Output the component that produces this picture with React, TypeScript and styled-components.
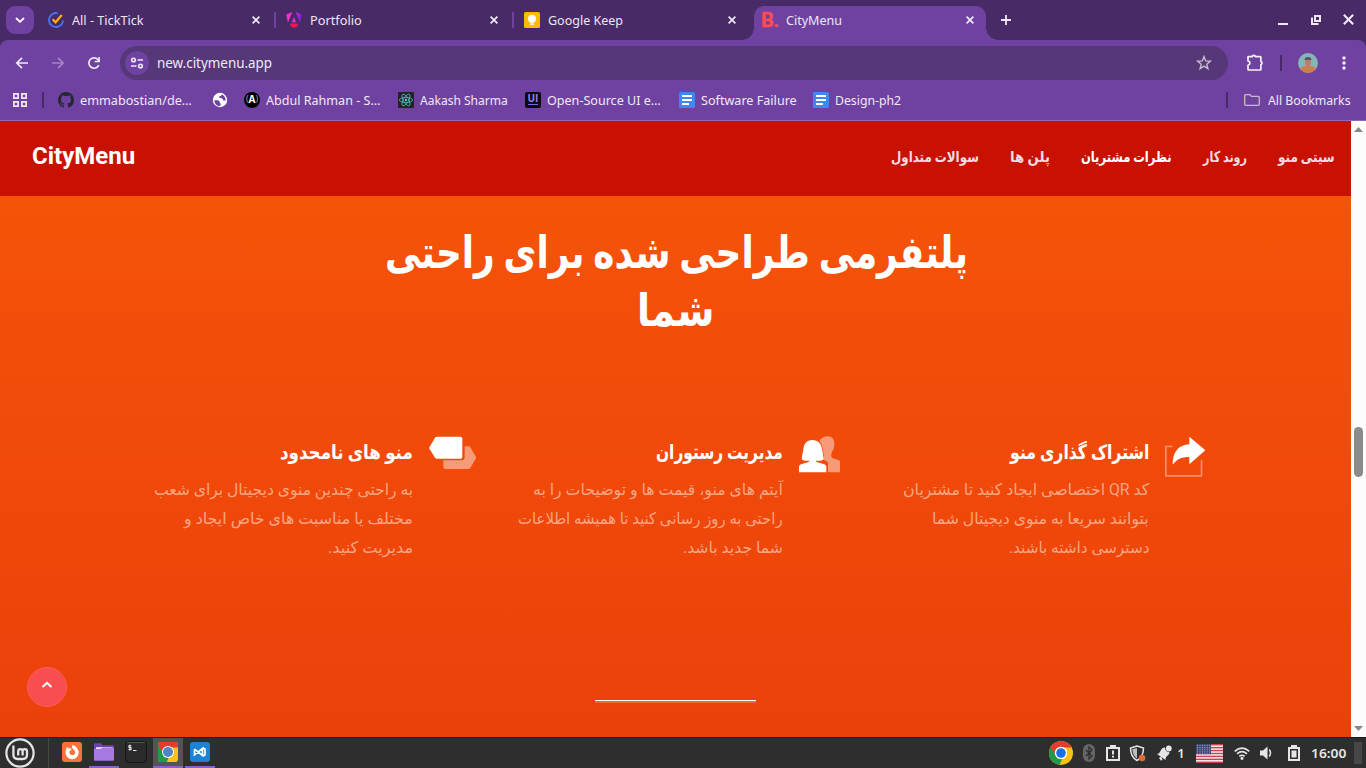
import React, { useLayoutEffect, useRef, useState } from 'react';
import styled, { createGlobalStyle } from 'styled-components';

const GlobalStyle = createGlobalStyle`
  * { box-sizing: border-box; }
  body { margin: 0; overflow: hidden; background: #2e2e2e; }
  svg { display: block; flex: none; }
`;

const ui = `'Noto Sans', 'Open Sans', sans-serif`;
const web = `Roboto, 'DejaVu Sans', sans-serif`;

/* A single line of text that is condensed or widened to a given measure. */
const Measure = styled.span<{ $w: number }>`
  display: block;
  flex: none;
  width: ${p => p.$w}px;
  white-space: nowrap;
`;
const Stretch = styled.span<{ $rtl?: boolean }>`
  display: inline-block;
  transform-origin: ${p => (p.$rtl ? 'right' : 'left')} center;
`;
function Fit({ w, rtl, children }: { w: number; rtl?: boolean; children: React.ReactNode }) {
  const ref = useRef<HTMLSpanElement>(null);
  const [scale, setScale] = useState(1);
  useLayoutEffect(() => {
    if (ref.current) setScale(w / ref.current.offsetWidth);
  }, [w]);
  return (
    <Measure $w={w}>
      <Stretch ref={ref} $rtl={rtl} style={{ transform: `scaleX(${scale})` }}>{children}</Stretch>
    </Measure>
  );
}

const Screen = styled.div`
  width: 1366px;
  height: 768px;
  display: flex;
  flex-direction: column;
  overflow: hidden;
  font-family: ${ui};
`;

/* ---------- browser chrome ---------- */
const TabStrip = styled.div`
  height: 40px;
  flex: none;
  display: flex;
  align-items: center;
  background: #472a66;
  color: #ece6f3;
  font-size: 13px;
`;
const TabSearch = styled.div`
  width: 28px;
  height: 28px;
  margin: 0 4px 0 6px;
  border-radius: 9px;
  background: #6f42a1;
  display: flex;
  align-items: center;
  justify-content: center;
`;
const Tab = styled.div<{ $active?: boolean; $divider?: boolean }>`
  position: relative;
  width: ${p => (p.$active ? 232 : 238)}px;
  height: 34px;
  margin: ${p => (p.$active ? '6px 0 0 2px' : '0')};
  padding: 0 ${p => (p.$active ? 12 : 16)}px ${p => (p.$active ? 6 : 0)}px ${p => (p.$active ? 8 : 10)}px;
  display: flex;
  align-items: center;
  gap: 8px;
  background: ${p => (p.$active ? '#6f42a1' : 'transparent')};
  border-radius: 10px 10px 0 0;
  ${p => p.$divider && `
    &::after {
      content: '';
      position: absolute;
      right: 0;
      top: 9px;
      width: 2px;
      height: 16px;
      background: #6f42a1;
    }`}
  ${p => p.$active && `
    &::before, &::after {
      content: '';
      position: absolute;
      bottom: 0;
      width: 12px;
      height: 12px;
    }
    &::before { left: -12px; background: radial-gradient(circle at 0 0, transparent 11.5px, #6f42a1 12px); }
    &::after { right: -12px; background: radial-gradient(circle at 100% 0, transparent 11.5px, #6f42a1 12px); }`}
`;
const Spacer = styled.div`flex: 1;`;
const WindowButtons = styled.div`
  display: flex;
  gap: 21px;
  margin-right: 12px;
`;
const NewTab = styled.div`margin-left: 13px;`;

const Chrome = styled.div`background: #472a66; flex: none;`;
const Panel = styled.div`
  height: 81px;
  background: #6f42a1;
  border-radius: 8px 8px 0 0;
  border-bottom: 1px solid #8d6ab5;
  color: #efe9f6;
`;
const Toolbar = styled.div`
  height: 46px;
  display: flex;
  align-items: center;
  padding-left: 14px;
`;
const NavIcons = styled.div`
  display: flex;
  gap: 20px;
  width: 106px;
`;
const Omnibox = styled.div`
  width: 1108px;
  height: 34px;
  border-radius: 17px;
  background: #563777;
  display: flex;
  align-items: center;
  padding: 0 16px 0 5px;
`;
const Address = styled.div`
  font-size: 14px;
  padding-bottom: 2px;
`;
const SiteInfo = styled.div`
  width: 24px;
  height: 24px;
  border-radius: 50%;
  background: #6f42a1;
  margin-right: 8px;
  display: flex;
  align-items: center;
  justify-content: center;
`;
const Divider = styled.div<{ $ml: number; $mr: number }>`
  width: 2px;
  height: 16px;
  margin: 0 ${p => p.$mr}px 0 ${p => p.$ml}px;
  background: #472a66;
`;
const BookmarkBar = styled.div`
  height: 28px;
  padding: 0 15px 0 12px;
  display: flex;
  align-items: center;
  font-size: 13px;
`;
const Bookmark = styled.div<{ $ml: number }>`
  display: flex;
  align-items: center;
  gap: 6px;
  margin-left: ${p => p.$ml}px;
`;

/* ---------- page ---------- */
const Viewport = styled.div`
  height: 616px;
  flex: none;
  display: flex;
`;
const Page = styled.div`
  width: 1351px;
  display: flex;
  flex-direction: column;
  background: linear-gradient(#f55309 75px, #ec400b 616px);
  font-family: ${web};
  color: #fff;
`;
const Header = styled.header`
  height: 75px;
  flex: none;
  background: #c81100;
  display: flex;
  align-items: center;
  justify-content: space-between;
  padding: 0 16px 4px 32px;
`;
const Brand = styled.div`
  font-size: 24px;
  font-weight: 700;
  line-height: 30px;
  padding-bottom: 1px;
`;
const Menu = styled.nav`
  direction: rtl;
  display: flex;
  gap: 31px;
  font-size: 15px;
  font-weight: 700;
`;
const MenuItem = styled.a<{ $active?: boolean }>`
  color: ${p => (p.$active ? '#fff' : '#f1dbe2')};
`;
const Hero = styled.h1`
  direction: rtl;
  height: 240px;
  margin: 0;
  padding: 28px 0 0 1px;
  display: flex;
  flex-direction: column;
  align-items: center;
  font-size: 45px;
  font-weight: 700;
  line-height: 58px;
`;
const Features = styled.section`
  direction: rtl;
  display: flex;
  height: 264px;
  padding: 0 145px 0 0;
`;
const Feature = styled.article`
  width: 366px;
  display: flex;
  align-items: flex-start;
  gap: 16px;
  &:nth-child(2) { width: 364px; }
`;
const FeatureTitle = styled.h3`
  margin: 1px 0 8px;
  font-size: 20px;
  font-weight: 700;
  line-height: 30px;
`;
const FeatureText = styled.div`
  font-size: 16px;
  line-height: 29px;
  color: #f9a583;
`;
const PageFoot = styled.div`
  display: flex;
  align-items: flex-start;
  height: 37px;
`;
const Rule = styled.div`
  width: 161px;
  height: 3px;
  margin-left: 528px;
  border-top: 1px solid #fff;
  background: #f4663a;
`;
const ToTop = styled.button`
  width: 40px;
  height: 40px;
  flex: none;
  margin: -33px 0 0 27px;
  padding: 0 0 4px;
  border: 1px solid #fa5c60;
  border-radius: 50%;
  background: #f94d50;
  display: flex;
  align-items: center;
  justify-content: center;
`;
const Scrollbar = styled.div`
  width: 15px;
  background: #fcfcfc;
  display: flex;
  flex-direction: column;
  align-items: center;
  justify-content: space-between;
  padding: 6px 1px 6px 0;
`;
const Track = styled.div`
  height: 580px;
  padding-top: 288px;
`;
const Thumb = styled.div`
  width: 9px;
  height: 50px;
  border-radius: 5px;
  background: #8b8b8b;
`;

/* ---------- desktop panel ---------- */
const Taskbar = styled.footer`
  height: 31px;
  flex: none;
  border-top: 1px solid #1c1c1c;
  background: #2e2e2e;
  display: flex;
  align-items: center;
  color: #e6e6e6;
  font-size: 13px;
  font-weight: 600;
`;
const StartMenu = styled.div`
  width: 49px;
  height: 30px;
  margin-right: 8px;
  padding-left: 5px;
  border-right: 1px solid #464646;
  display: flex;
  align-items: center;
`;
const TaskButton = styled.div<{ $open?: boolean; $focused?: boolean }>`
  width: 30px;
  height: 30px;
  margin-right: 2px;
  padding-bottom: ${p => (p.$open ? 0 : 2)}px;
  display: flex;
  align-items: center;
  justify-content: center;
  background: ${p => (p.$focused ? '#545454' : 'transparent')};
  border-bottom: ${p => (p.$open ? '2px solid #8b5fd0' : 'none')};
`;
const Tray = styled.div<{ $w: number }>`
  width: ${p => p.$w}px;
  height: 30px;
  display: flex;
  align-items: center;
  justify-content: center;
`;
const ShowDesktop = styled.div`
  width: 8px;
  height: 22px;
  margin: 0 4px 0 2px;
  background: #474747;
`;

/* ---------- drawings ---------- */
const CloseIcon = ({ size = 8 }: { size?: number }) => (
  <svg width={size} height={size} viewBox="0 0 8 8"><path d="M.6.6l6.8 6.8M7.4.6L.6 7.4" stroke="#f0ebf6" strokeWidth={size > 8 ? 1.5 : 1.7} /></svg>
);
const TickTick = () => (
  <svg width="16" height="16" viewBox="0 0 16 16" fill="none">
    <path d="M9.600 1.200A7 7 0 1 0 15 8.400" stroke="#4772fa" strokeWidth="1.800" />
    <path d="M4.600 7.300l3 3L13.800 3" stroke="#ffb000" strokeWidth="2.200" />
  </svg>
);
const Angular = () => (
  <svg width="16" height="16" viewBox="0 0 16 16">
    <defs><linearGradient id="ng" gradientUnits="userSpaceOnUse" x1="0" y1="6" x2="16" y2="6"><stop stopColor="#ff2fc0" /><stop offset=".5" stopColor="#e32fd0" /><stop offset="1" stopColor="#7514f5" /></linearGradient></defs>
    <path d="M6.300 0L1.900 10.700.3 2.500zM9.700 0l4.400 10.700 1.600-8.200zM8 4.900l2.200 5.300H5.800z" fill="url(#ng)" />
    <path d="M4.800 11.600h6.400l.9 2.200L8 16l-4.100-2.200z" fill="#ff1158" />
  </svg>
);
const Keep = () => (
  <svg width="16" height="16" viewBox="0 0 16 16">
    <rect width="16" height="16" rx="1.500" fill="#fbbc04" />
    <circle cx="8" cy="6.700" r="4" fill="#fff" /><path d="M5.800 9h4.400v1.600H5.800zM6 11.400h4v1.300H6z" fill="#fff" />
  </svg>
);
const BrandB = styled.span`
  width: 16px;
  flex: none;
  font: 700 20px/20px Roboto, sans-serif;
  letter-spacing: -.6px;
  text-indent: -1px;
  color: #fb4c4f;
  -webkit-text-stroke: .4px #fb4c4f;
`;
const GitHub = () => (
  <svg width="16" height="16" viewBox="0 0 16 16" fill="#24292f"><path d="M8 0C3.58 0 0 3.58 0 8c0 3.54 2.29 6.53 5.47 7.59.4.07.55-.17.55-.38 0-.19-.01-.82-.01-1.49-2.01.37-2.53-.49-2.69-.94-.09-.23-.48-.94-.82-1.13-.28-.15-.68-.52-.01-.53.63-.01 1.08.58 1.23.82.72 1.21 1.87.87 2.33.66.07-.52.28-.87.51-1.07-1.78-.2-3.64-.89-3.64-3.95 0-.87.31-1.59.82-2.15-.08-.2-.36-1.02.08-2.12 0 0 .67-.21 2.2.82a7.6 7.6 0 0 1 4 0c1.53-1.04 2.2-.82 2.2-.82.44 1.1.16 1.92.08 2.12.51.56.82 1.27.82 2.15 0 3.07-1.87 3.75-3.65 3.95.29.25.54.73.54 1.48 0 1.07-.01 1.93-.01 2.2 0 .21.15.46.55.38A8 8 0 0 0 16 8c0-4.42-3.58-8-8-8z" /></svg>
);
const Globe = () => (
  <svg width="16" height="16" viewBox="0 0 16 16">
    <circle cx="8" cy="8" r="7.200" fill="#fff" />
    <path d="M2.300 8.300h3.200q2.200 0 2.200 1.800v.6q1.300.3 1 2.600l-1.400.9C4.300 13.800 2.300 11.500 2.300 8.300z" fill="#6f42a1" />
    <path d="M9.700 2.500q-.3 1.500-1.600 1.500-1.200.2-1 1.300.2.800 1.800.7 1.700 0 1.900 1.500.2 1.100 1.300 1.100l1.600-.1C13.700 5.800 12 3.200 9.700 2.500z" fill="#6f42a1" />
  </svg>
);
const LetterBadge = styled.span`
  width: 16px;
  height: 16px;
  flex: none;
  border-radius: 50%;
  background: #000;
  color: #fff;
  font: 700 10px/15px 'Open Sans', sans-serif;
  display: flex;
  justify-content: center;
  i { font: 400 9px/14px 'Open Sans', sans-serif; color: #aaa; }
`;
const ReactLogo = () => (
  <svg width="16" height="16" viewBox="0 0 16 16">
    <rect width="16" height="16" rx="1" fill="#222" />
    <g fill="none" stroke="#55bccb" strokeWidth=".8">
      <ellipse cx="8" cy="8" rx="6.600" ry="2.600" />
      <ellipse cx="8" cy="8" rx="6.600" ry="2.600" transform="rotate(60 8 8)" />
      <ellipse cx="8" cy="8" rx="6.600" ry="2.600" transform="rotate(120 8 8)" />
    </g>
    <circle cx="8" cy="8" r="1.200" fill="#5ccfe0" />
  </svg>
);
const UiBadge = styled.span`
  width: 16px;
  height: 16px;
  flex: none;
  border-radius: 2px;
  background: linear-gradient(#7a68e0, #7a68e0) 3px 12px / 10px 1px no-repeat, #0c0a12;
  color: #9084f4;
  font: 700 10px/13px 'Open Sans', sans-serif;
  text-align: center;
`;
const Docs = () => (
  <svg width="16" height="16" viewBox="0 0 16 16"><rect width="16" height="16" rx="1.500" fill="#4285f4" /><path d="M3 3h10v2H3zM3 7h10v2H3zM3 11h7v2H3z" fill="#fff" /></svg>
);
const Folder = () => (
  <svg width="16" height="12" viewBox="0 0 16 12"><path d="M.7 10.300V1.700q0-1 1-1h4.200l1.600 1.700h6.800q1 0 1 1v6.900q0 1-1 1H1.700q-1 0-1-1z" fill="none" stroke="#c8bccb" strokeWidth="1.300" /></svg>
);
const ChromeLogo = ({ size, square }: { size: number; square?: boolean }) => (
  <svg width={size} height={size} viewBox="0 0 24 24">
    <defs><clipPath id={square ? 'cs' : 'cc'}>{square ? <rect x="0" y="0" width="24" height="24" rx="4" /> : <circle cx="12" cy="12" r="12" />}</clipPath></defs>
    <g clipPath={`url(#${square ? 'cs' : 'cc'})`}>
      <rect width="24" height="24" fill="#fbc116" />
      <path d="M-2-2h28v8.500H12L7 15-2 3z" fill="#e33b2e" />
      <path d="M0 3.500L7.200 15l4.800 2.500h1.500L10 25H-2z" fill="#229a48" />
    </g>
    <circle cx="12" cy="12" r={square ? 7.2 : 6.2} fill="#fff" />
    <circle cx="12" cy="12" r={square ? 6 : 4.8} fill={square ? '#4f86c6' : '#1a6fe8'} />
  </svg>
);

const tabs = [
  { icon: <TickTick />, title: 'All - TickTick', w: 72 },
  { icon: <Angular />, title: 'Portfolio', w: 52 },
  { icon: <Keep />, title: 'Google Keep', w: 75 },
  { icon: <BrandB>B.</BrandB>, title: 'CityMenu', w: 56 },
];
const bookmarks = [
  { icon: <GitHub />, title: 'emmabostian/de…', w: 112, ml: 0 },
  { icon: <Globe />, title: '', w: 0, ml: 20 },
  { icon: <LetterBadge><i>(</i>A<i>)</i></LetterBadge>, title: 'Abdul Rahman - S…', w: 114, ml: 16 },
  { icon: <ReactLogo />, title: 'Aakash Sharma', w: 88, ml: 18 },
  { icon: <UiBadge>UI</UiBadge>, title: 'Open-Source UI e…', w: 114, ml: 17 },
  { icon: <Docs />, title: 'Software Failure', w: 96, ml: 18 },
  { icon: <Docs />, title: 'Design-ph2', w: 66, ml: 16 },
];
const menu = [
  { text: 'سیتی منو', w: 57 },
  { text: 'روند کار', w: 44 },
  { text: 'نظرات مشتریان', w: 91, active: true },
  { text: 'پلن ها', w: 40 },
  { text: 'سوالات متداول', w: 88 },
];

const ShareIcon = () => (
  <svg width="41" height="41" viewBox="885 50 123 123">
    <path d="M908 81.500H887.500V169.500H994.500V123" fill="none" stroke="#f98d66" strokeWidth="5" />
    <path d="M958 52l48 41-48 42v-22c-24 0-38 6-48 22h-2c0-37 17-58 50-60z" fill="#fff" />
  </svg>
);
const PeopleIcon = () => (
  <svg width="41" height="37" viewBox="897 50 123 111">
    <path d="M958 66c5-10 15-15 25-15 14 0 20 10 20 23 0 10-2 16-6 22-4 7-5 16 0 20l20 7q3 1 3 5v31h-36v-27q0-6-6-8l-14-5q10-2 8-9l-5-25c-1-8-4-14-9-19z" fill="#f79a78" />
    <path d="M937 62c18 0 27 12 29 28l5 27q0 6-8 7h-15c0 3 2 4 5 5l20 6q6 2 6 7v17h-82v-17q0-5 6-7l20-6q5-2 5-5h-15q-8-1-8-7l5-27c2-16 9-28 27-28z" fill="#fff" />
  </svg>
);
const TagsIcon = () => (
  <svg width="47" height="34" viewBox="866 50 141 102">
    <path d="M973 81h11q4 0 6 3l18 31-18 31q-2 3-6 3h-69q-6 0-6-6v-20h55q9 0 9-9z" fill="#f79a78" />
    <path d="M890 52h70q6 0 6 6v54q0 6-6 6h-70q-4 0-6-3l-18-29 18-31q2-3 6-3z" fill="#fff" />
  </svg>
);
const features = [
  { icon: <ShareIcon />, title: 'اشتراک گذاری منو', tw: 139, lines: [['کد QR اختصاصی ایجاد کنید تا مشتریان', 246], ['بتوانند سریعا به منوی دیجیتال شما', 217], ['دسترسی داشته باشند.', 140]] },
  { icon: <PeopleIcon />, title: 'مدیریت رستوران', tw: 127, lines: [['آیتم های منو، قیمت ها و توضیحات را به', 250], ['راحتی به روز رسانی کنید تا همیشه اطلاعات', 265], ['شما جدید باشد.', 100]] },
  { icon: <TagsIcon />, title: 'منو های نامحدود', tw: 133, lines: [['به راحتی چندین منوی دیجیتال برای شعب', 259], ['مختلف یا مناسبت های خاص ایجاد و', 229], ['مدیریت کنید.', 85]] },
] as { icon: React.ReactNode; title: string; tw: number; lines: [string, number][] }[];

const Flag = () => (
  <svg width="27" height="19" viewBox="0 0 27 19">
    <rect width="27" height="19" fill="#f4f4f4" />
    {[0, 1, 2, 3, 4, 5, 6].map(i => <rect key={i} y={i * 2.92} width="27" height="1.46" fill="#c8434e" />)}
    <rect width="15" height="10.200" fill="#3c4778" />
    {[0, 1, 2, 3, 4].map(r => [0, 1, 2, 3, 4, 5].map(c => <circle key={`${r}-${c}`} cx={1.6 + c * 2.4} cy={1.2 + r * 1.95} r=".5" fill="#c5c9dc" />))}
  </svg>
);

export default function App() {
  return (
    <Screen>
      <GlobalStyle />
      <TabStrip>
        <TabSearch><svg width="10" height="6" viewBox="0 0 10 6"><path d="M1 1l4 3.800L9 1" fill="none" stroke="#fff" strokeWidth="1.800" /></svg></TabSearch>
        {tabs.map((t, i) => (
          <Tab key={t.title} $active={i === 3} $divider={i < 2}>
            {t.icon}<Fit w={t.w}>{t.title}</Fit><Spacer /><CloseIcon />
          </Tab>
        ))}
        <NewTab><svg width="12" height="12" viewBox="0 0 12 12"><path d="M7 1v10M2 6h10" stroke="#efe9f6" strokeWidth="1.800" /></svg></NewTab>
        <Spacer />
        <WindowButtons>
          <svg width="13" height="12" viewBox="0 0 13 12"><path d="M1 10h10" stroke="#eee8f4" strokeWidth="2" /></svg>
          <svg width="11" height="12" viewBox="0 0 11 12" fill="none" stroke="#eee8f4"><path d="M4 2h5v5H4z" strokeWidth="2" /><path d="M1 3.500V10h6.500" strokeWidth="2" /></svg>
          <CloseIcon size={11} />
        </WindowButtons>
      </TabStrip>
      <Chrome>
        <Panel>
          <Toolbar>
            <NavIcons>
              <svg width="16" height="16" viewBox="0 0 16 16"><path d="M14 8H3M8 2.800L2.800 8 8 13.200" fill="none" stroke="#efe9f6" strokeWidth="1.700" /></svg>
              <svg width="16" height="16" viewBox="0 0 16 16"><path d="M2 8h11M8 2.800L13.200 8 8 13.200" fill="none" stroke="#a283c4" strokeWidth="1.700" /></svg>
              <svg width="16" height="16" viewBox="0 0 16 16"><path d="M12.800 10.200A5.200 5.200 0 1 1 12.300 5l.9 1" fill="none" stroke="#efe9f6" strokeWidth="1.700" /><path d="M13.900 2v5.300H8.600V5.700h3.700V2z" fill="#efe9f6" /></svg>
            </NavIcons>
            <Omnibox>
              <SiteInfo><svg width="14" height="14" viewBox="0 0 14 14" fill="none" stroke="#efe9f6" strokeWidth="1.600"><circle cx="3.500" cy="4" r="1.800" /><path d="M7.500 4H13M1 10h5.500" /><circle cx="10.500" cy="10" r="1.800" /></svg></SiteInfo>
              <Address><Fit w={115}>new.citymenu.app</Fit></Address>
              <Spacer />
              <svg width="16" height="16" viewBox="0 0 16 16"><path d="M8 1.600l1.700 4.300 4.600.3-3.500 3 1.100 4.500L8 11.200l-3.900 2.500 1.100-4.500-3.500-3 4.600-.3z" fill="none" stroke="#c7bdca" strokeWidth="1.400" /></svg>
            </Omnibox>
            <Spacer />
            <svg width="18" height="18" viewBox="0 0 18 18"><path d="M2 2.700h4.200a1.600 1.400 0 0 1 3.200 0h4.800q.7 0 .7.700V7.600a1.500 1.500 0 0 1 0 2.900v4.800q0 .7-.7.700H2.700q-.7 0-.7-.7v-4q2-.6 2-2.200T2 6.900z" fill="none" stroke="#f5f0fa" strokeWidth="1.700" strokeLinejoin="round" /></svg>
            <Divider $ml={16} $mr={16} />
            <svg width="20" height="20" viewBox="0 0 20 20"><defs><clipPath id="av"><circle cx="10" cy="10" r="10" /></clipPath></defs><g clipPath="url(#av)"><path d="M0 0h20v20H0z" fill="#85b5b5" /><path d="M1 20q0-6 6-7h6q6 1 6 7z" fill="#cf7d4d" /><ellipse cx="10" cy="9" rx="3" ry="4.200" fill="#b67f69" /><path d="M6.500 7q0-3 3.500-3t3.500 3z" fill="#54546a" /></g></svg>
            <svg width="48" height="16" viewBox="0 0 48 16" fill="#f5f0fa"><circle cx="26" cy="3" r="1.700" /><circle cx="26" cy="8" r="1.700" /><circle cx="26" cy="13" r="1.700" /></svg>
          </Toolbar>
          <BookmarkBar>
            <svg width="16" height="16" viewBox="0 0 16 16" fill="none" stroke="#efe9f6" strokeWidth="1.700"><path d="M1.900 1.900h4.200v4.200H1.900zM9.900 1.900h4.200v4.200H9.900zM1.900 9.900h4.200v4.200H1.900zM9.900 9.900h4.200v4.200H9.900z" /></svg>
            <Divider $ml={14} $mr={14} />
            {bookmarks.map(b => (
              <Bookmark key={b.title + b.ml} $ml={b.ml}>{b.icon}{b.title && <Fit w={b.w}>{b.title}</Fit>}</Bookmark>
            ))}
            <Spacer />
            <Divider $ml={0} $mr={16} />
            <Folder />
            <Bookmark $ml={8}><Fit w={83}>All Bookmarks</Fit></Bookmark>
          </BookmarkBar>
        </Panel>
      </Chrome>

      <Viewport>
        <Page>
          <Header>
            <Brand><Fit w={103}>CityMenu</Fit></Brand>
            <Menu>
              {menu.map(m => <MenuItem key={m.text} $active={m.active}><Fit rtl w={m.w}>{m.text}</Fit></MenuItem>)}
            </Menu>
          </Header>
          <Hero>
            <Fit rtl w={583}>پلتفرمی طراحی شده برای راحتی</Fit>
            <Fit rtl w={77}>شما</Fit>
          </Hero>
          <Features>
            {features.map(f => (
              <Feature key={f.title}>
                {f.icon}
                <div>
                  <FeatureTitle><Fit rtl w={f.tw}>{f.title}</Fit></FeatureTitle>
                  <FeatureText>{f.lines.map(([text, w]) => <Fit key={text} rtl w={w}>{text}</Fit>)}</FeatureText>
                </div>
              </Feature>
            ))}
          </Features>
          <PageFoot>
            <ToTop aria-label="top"><svg width="12" height="8" viewBox="0 0 12 8"><path d="M1.500 6L6 1.900 10.500 6" fill="none" stroke="#fff" strokeWidth="2" /></svg></ToTop>
            <Rule />
          </PageFoot>
        </Page>
        <Scrollbar>
          <svg width="9" height="5" viewBox="0 0 9 5"><path d="M0 5l4.500-5L9 5z" fill="#888" /></svg>
          <Track><Thumb /></Track>
          <svg width="9" height="5" viewBox="0 0 9 5"><path d="M0 0l4.500 5L9 0z" fill="#888" /></svg>
        </Scrollbar>
      </Viewport>

      <Taskbar>
        <StartMenu>
          <svg width="30" height="30" viewBox="0 0 30 30" fill="none" stroke="#e4e4e4"><circle cx="15" cy="15" r="13.600" strokeWidth="2.200" /><path d="M8.400 7.500v9.300q0 4.200 4.200 4.200h5.200q4.200 0 4.200-4.200v-3.300q0-2.300-2.200-2.300t-2.200 2.300v4M17.600 13.500q0-2.300-2.200-2.300t-2.200 2.300v4" strokeWidth="2.300" /></svg>
        </StartMenu>
        <TaskButton>
          <svg width="20" height="20" viewBox="0 0 20 20"><rect width="20" height="20" rx="3" fill="#fb7137" /><path d="M9.800 5.500l.9-2.800c3.400 1.800 6 4.300 6 8a6.600 6.600 0 0 1-13.200 0c0-2.400.7-4.500 1.700-5.800l1.300 1.500c1.200-.4 2.200-.3 3.300.5L8.600 8.500 7.300 9.800c0 2 1.300 3.300 3 3.300 1.800 0 3-1.300 2.900-2.900-.2-1.700-2-2.800-3.400-4.700z" fill="#fff" /></svg>
        </TaskButton>
        <TaskButton $open>
          <svg width="20" height="18" viewBox="0 0 20.500 18"><path d="M0 1q0-1 1-1h6l2 2h10.500q1 0 1 1v5H0z" fill="#7340b8" /><path d="M2 4h17v3H2z" fill="#e5dcef" /><path d="M0 6h7l2-1.500h11.500V17q0 1-1 1H1q-1 0-1-1z" fill="#a67ae2" /></svg>
        </TaskButton>
        <TaskButton>
          <svg width="22" height="22" viewBox="0 0 22 22"><rect x=".5" y=".5" width="21" height="21" rx="3" fill="#2b2b2b" stroke="#151515" /><path d="M2 1.500h18" stroke="#555" /><path d="M6.300 4.700H3.800v1.800h2.400v2H3.500M5 3.700v6M8 9.500h3.500" stroke="#eee" fill="none" /></svg>
        </TaskButton>
        <TaskButton $open $focused><ChromeLogo size={20} square /></TaskButton>
        <TaskButton $open>
          <svg width="20" height="20" viewBox="0 0 20 20"><rect width="20" height="20" rx="3" fill="#1c83d4" /><path d="M4.500 7.200l8 6.300V6.500l-8 6.300V7.200M12.500 5.800l2.500 1.200v6l-2.500 1.200" fill="none" stroke="#fff" strokeWidth="1.700" /></svg>
        </TaskButton>
        <Spacer />
        <Tray $w={26}><ChromeLogo size={24} /></Tray>
        <Tray $w={30}><svg width="12" height="18" viewBox="0 0 12 18"><rect width="12" height="18" rx="6" fill="#666" /><path d="M3 6l6 6-3 3V3l3 3-6 6" fill="none" stroke="#2c2c2c" strokeWidth="1.200" /></svg></Tray>
        <Tray $w={18}><svg width="14" height="16" viewBox="0 0 14 16"><path d="M1 3h12v12H1z" fill="none" stroke="#e6e6e6" strokeWidth="2" /><path d="M4 0h6v4H4zM6 5.500h2v4H6zM6 10.800h2v1.800H6z" fill="#e6e6e6" /></svg></Tray>
        <Tray $w={30}><svg width="17" height="17" viewBox="0 0 17 17"><path d="M8 1l6.500 2c0 6-2 10-6.500 12.500C3.500 13 1.500 9 1.500 3z" fill="#2e2e2e" stroke="#e6e6e6" strokeWidth="1.500" /><path d="M8 3L3.300 4.300C3.600 8.500 5 11.500 8 13.500z" fill="#bbb" /><circle cx="13" cy="13" r="3.300" fill="#dd6c38" /></svg></Tray>
        <Tray $w={24}><svg width="15" height="16" viewBox="0 0 15 16" fill="#e6e6e6"><path d="M0 9c4 0 3-6.500 8-6.500 0 3 1.500 4.500 4.500 4.800C12 11 8.500 10.500 8.500 15z" /><circle cx="11.800" cy="3.500" r="2.900" /><path d="M2 13l2-1.500 1.500 3-1.500 1.200z" /></svg></Tray>
        <Tray $w={10}>1</Tray>
        <Tray $w={47}><Flag /></Tray>
        <Tray $w={18}><svg width="16" height="13" viewBox="0 0 16 13" fill="none" stroke="#e6e6e6" strokeWidth="1.600"><path d="M.7 4.300q7.300-6.400 14.600 0M3 6.900q5-4.400 10 0M5.300 9.400q2.700-2.300 5.400 0" /><circle cx="8" cy="11.300" r=".8" fill="#e6e6e6" /></svg></Tray>
        <Tray $w={31}><svg width="14" height="14" viewBox="0 0 14 14"><path d="M0 4.500h3L7.500.5v13L3 9.500H0z" fill="#e6e6e6" /><path d="M9.200 3.500q2.600 3.500 0 7" fill="none" stroke="#e6e6e6" strokeWidth="1.500" /></svg></Tray>
        <Tray $w={23}><svg width="12" height="16" viewBox="0 0 12 16"><path d="M1 3h10v12H1z" fill="none" stroke="#e6e6e6" strokeWidth="2" /><path d="M3 0h6v3H3zM3.500 5.500h5v7h-5z" fill="#e6e6e6" /></svg></Tray>
        <Tray $w={47}><Fit w={35}>16:00</Fit></Tray>
        <ShowDesktop />
      </Taskbar>
    </Screen>
  );
}
